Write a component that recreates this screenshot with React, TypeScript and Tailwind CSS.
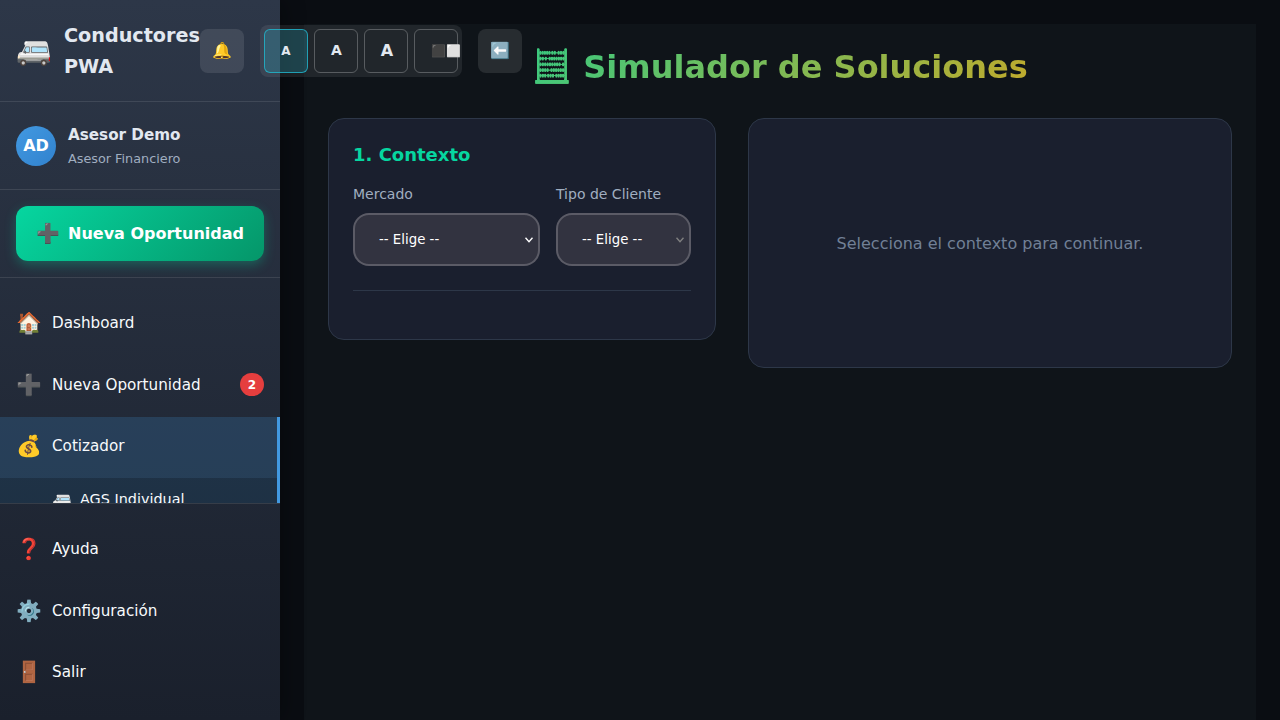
import React from "react";

type NavItemProps = { icon: string; label: string; badge?: number };

function NavItem({ icon, label, badge }: NavItemProps) {
  return (
    <a className="flex h-[61.4px] shrink-0 items-center gap-3 px-4 pb-[2.4px] text-[15.2px] text-[#f7fafc]">
      <span className="flex w-6 shrink-0 justify-center pl-[2px] text-[20.8px] leading-none">{icon}</span>
      <span className="flex-1">{label}</span>
      {badge !== undefined && (
        <span className="mb-px flex h-[23px] w-6 items-center justify-center rounded-full bg-[#e53e3e] pt-px text-[12px] font-bold text-white">
          {badge}
        </span>
      )}
    </a>
  );
}

function Sidebar() {
  return (
    <aside className="relative z-10 flex h-[720px] w-[280px] shrink-0 flex-col bg-[linear-gradient(180deg,#2d3748_0%,#1a202c_100%)] shadow-[4px_0_20px_rgba(0,0,0,0.3)]">
      <header className="flex h-[102px] shrink-0 items-center border-b border-white/10 pl-4">
        <span className="mr-3 w-9 shrink-0 text-[28.8px] leading-none">🚐</span>
        <div className="w-[136px] shrink-0 pt-[2px] text-[19.2px] leading-[30.7px] font-bold text-[#e2e8f0]">
          Conductores PWA
        </div>
        <div className="flex shrink-0 items-center gap-4 text-[#e2e8f0]">
          <button className="flex size-11 items-center justify-center rounded-lg bg-white/10 text-[16px]">🔔</button>
          <div className="flex gap-1.5 rounded-lg bg-white/8 p-1">
            <button className="size-11 rounded-md border border-[#22b8cf]/80 bg-[#22adc5]/25 text-[12px] font-bold">A</button>
            <button className="size-11 rounded-md border border-white/25 pl-px text-[14px] font-bold">A</button>
            <button className="size-11 rounded-md border border-white/25 pl-[2px] text-[16px] font-bold">A</button>
            <button className="size-11 rounded-md border border-white/25 pl-4 text-left text-[12px] font-bold whitespace-nowrap">⬛⬜</button>
          </div>
          <button className="flex size-11 items-center justify-center rounded-lg bg-white/10 text-[16px]">⬅️</button>
        </div>
      </header>

      <section className="flex h-22 shrink-0 items-center gap-3 border-b border-white/10 px-4">
        <div className="flex size-10 items-center justify-center rounded-full bg-[linear-gradient(135deg,#4299e1,#3182ce)] text-[16px] font-bold text-white">
          AD
        </div>
        <div className="pt-[2px]">
          <div className="text-[15.2px] leading-[24.3px] font-semibold text-[#e2e8f0]">Asesor Demo</div>
          <div className="mt-[2px] text-[12.8px] leading-[20.5px] text-[#a0aec0]">Asesor Financiero</div>
        </div>
      </section>

      <section className="h-22 shrink-0 border-b border-white/10 p-4">
        <button className="flex h-[55px] w-full items-center justify-center gap-2 rounded-xl bg-[linear-gradient(135deg,#06d6a0,#059669)] text-[16px] font-bold text-white shadow-[0_4px_12px_rgba(6,214,160,0.3)]">
          <span className="text-[19.2px] leading-none">➕</span>
          Nueva Oportunidad
        </button>
      </section>

      <nav className="min-h-0 flex-1 overflow-hidden pt-[16.3px]">
        <NavItem icon="🏠" label="Dashboard" />
        <NavItem icon="➕" label="Nueva Oportunidad" badge={2} />
        <div className="border-r-3 border-[#4299e1] bg-[#4299e1]/20">
          <NavItem icon="💰" label="Cotizador" />
          <div className="h-40 bg-black/20">
            <a className="flex h-[43px] items-center gap-2 pl-[52px] text-[14.4px] text-[#f7fafc]">
              <span className="w-5 text-[16px] leading-none">🚐</span>
              AGS Individual
            </a>
          </div>
        </div>
      </nav>

      <footer className="h-[217px] shrink-0 border-t border-white/10 pt-[16.3px]">
        <NavItem icon="❓" label="Ayuda" />
        <NavItem icon="⚙️" label="Configuración" />
        <NavItem icon="🚪" label="Salir" />
      </footer>
    </aside>
  );
}

function ContextField({ label, disabled = false }: { label: string; disabled?: boolean }) {
  return (
    <label className="block">
      <span className="mb-2 block text-[14px] leading-[22.4px] text-[#a0aec0]">{label}</span>
      <span className="relative block">
        <select
          disabled={disabled}
          className="block h-[53px] w-full appearance-none rounded-2xl border-2 border-white/20 bg-[#323340] px-6 text-[13.333px] text-white opacity-100"
        >
          <option>-- Elige --</option>
        </select>
        <svg
          viewBox="0 0 8 6"
          className={`pointer-events-none absolute top-[24px] right-[7px] h-[6px] w-2 ${disabled ? "text-[#808080]" : "text-white"}`}
          fill="none"
          stroke="currentColor"
          strokeWidth="1.4"
        >
          <path d="M0.5 0.8 L4 4.6 L7.5 0.8" />
        </svg>
      </span>
    </label>
  );
}

export default function App() {
  return (
    <div className="flex h-[720px] w-[1280px] overflow-hidden bg-[#0a0d12] [font-family:'DejaVu_Sans',sans-serif]">
      <Sidebar />
      <div className="flex-1 px-6 pt-6">
        <main className="h-full bg-[#0f1419] p-6 pt-[18px]">
          <h1 className="mb-[25px] bg-[linear-gradient(135deg,#06d6a0,#f59e0b)] bg-clip-text text-center text-[32px] leading-[51px] font-bold text-transparent">
            <span className="align-[1px] leading-none">🧮</span> Simulador de Soluciones
          </h1>
          <div className="grid grid-cols-[388px_484px] items-start gap-8">
            <section className="h-[222px] rounded-2xl border border-[#2d3748] bg-[#1a1f2e] p-6">
              <h2 className="mt-[-2px] mb-[14px] text-[18px] leading-7 font-bold text-[#06d6a0]">1. Contexto</h2>
              <div className="grid grid-cols-[187px_135px] gap-4">
                <ContextField label="Mercado" />
                <ContextField label="Tipo de Cliente" disabled />
              </div>
              <hr className="mt-6 border-[#2d3748]" />
            </section>
            <section className="flex h-[250px] items-center justify-center rounded-2xl border border-[#2d3748] bg-[#1a1f2e] pt-[2px] text-[16px] text-[#718096]">
              Selecciona el contexto para continuar.
            </section>
          </div>
        </main>
      </div>
    </div>
  );
}
